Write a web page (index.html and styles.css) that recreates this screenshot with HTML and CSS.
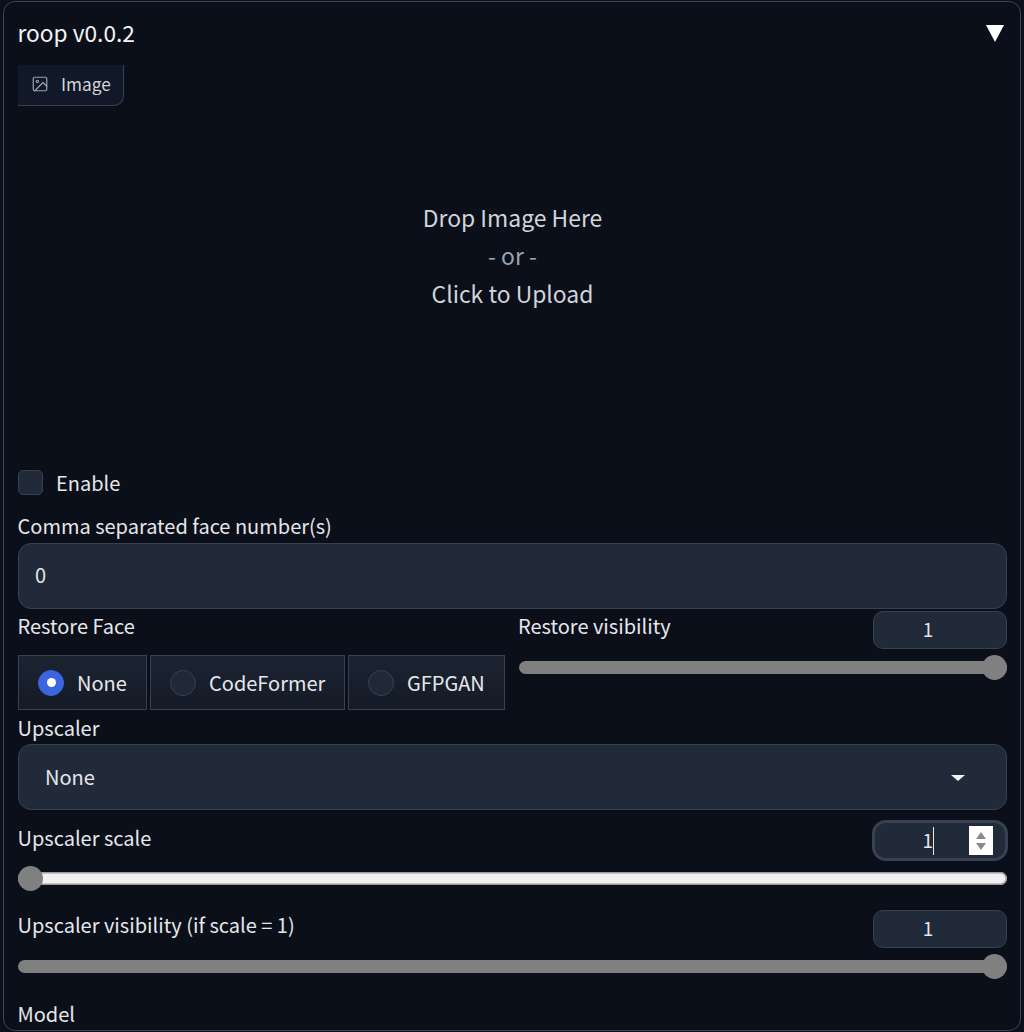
FILE: index.html
```html
<!DOCTYPE html>
<html lang="en">
<head>
<meta charset="utf-8">
<title>roop v0.0.2</title>
<link rel="stylesheet" href="styles.css">
</head>
<body>
<section class="panel">
  <header class="panel-head">
    <span class="panel-title">roop v0.0.2</span>
    <svg class="caret" viewBox="0 0 18 18" aria-hidden="true"><polygon points="0,0 18,0 9,17"/></svg>
  </header>
  <div class="tab">
    <svg class="tab-icon" viewBox="0 0 24 24" fill="none" stroke="currentColor" stroke-width="1.6" stroke-linecap="round" stroke-linejoin="round" aria-hidden="true"><rect x="3" y="3" width="18" height="18" rx="2"/><circle cx="8.5" cy="8.5" r="1.5"/><polyline points="21 15 16 10 5 21"/></svg>
    <span>Image</span>
  </div>
  <div class="drop">
    <div>Drop Image Here</div>
    <div class="drop-or">- or -</div>
    <div>Click to Upload</div>
  </div>
  <label class="check-row"><span class="checkbox"></span><span class="check-text">Enable</span></label>
  <div class="label face-label">Comma separated face number(s)</div>
  <div class="field face-field">0</div>
  <div class="restore">
    <div>
      <div class="label restore-label">Restore Face</div>
      <div class="radios">
        <div class="radio radio-none"><span class="dot dot-on"></span>None</div>
        <div class="radio radio-code"><span class="dot"></span>CodeFormer</div>
        <div class="radio radio-gfp"><span class="dot"></span>GFPGAN</div>
      </div>
    </div>
    <div>
      <div class="slider-head restore-head">
        <span class="label restore-vis">Restore visibility</span>
        <span class="num">1</span>
      </div>
      <div class="track"><span class="thumb thumb-end"></span></div>
    </div>
  </div>
  <div class="label upscaler-label">Upscaler</div>
  <div class="field select-field">None<span class="select-arrow"></span></div>
  <div class="slider-head scale-head">
    <span class="label">Upscaler scale</span>
    <span class="num num-focus"><span class="num-value">1</span><span class="cursor"></span><span class="spinner"><i class="up"></i><i class="down"></i></span></span>
  </div>
  <div class="track track-white"><span class="thumb thumb-start"></span></div>
  <div class="slider-head vis-head">
    <span class="label">Upscaler visibility (if scale = 1)</span>
    <span class="num">1</span>
  </div>
  <div class="track"><span class="thumb thumb-end"></span></div>
  <div class="label model-label">Model</div>
</section>
</body>
</html>
```
FILE: styles.css
```css
* { box-sizing: border-box; }
html, body { margin: 0; height: 1032px; overflow: hidden; background: #0b0f19; }
body {
  font-family: "Noto Sans CJK SC", "Source Sans Pro", "Noto Sans", sans-serif;
  color: #e5e7eb;
  font-size: 20px;
  line-height: 28px;
  padding: 1px 3px 0;
}
.panel {
  height: 1030px;
  border: 1px solid #3d4658;
  border-radius: 12px;
  padding: 0 13px 0 14px;
  background: #0b0f19;
}
.panel-head {
  height: 63px;
  display: flex;
  align-items: center;
  justify-content: space-between;
  padding: 1px 3px 0 0;
}
.panel-title { font-size: 22.7px; color: #f3f4f6; margin-top: -3px; margin-left: -0.5px; }
.caret { width: 18px; height: 18px; fill: #fff; }
.tab {
  width: 106px;
  height: 41px;
  display: flex;
  align-items: center;
  gap: 12px;
  padding: 0 0 2px 13px;
  background: #111827;
  border-right: 1px solid #374151;
  border-bottom: 1px solid #374151;
  border-bottom-right-radius: 10px;
  font-size: 17.3px;
  color: #d1d5db;
}
.tab-icon { width: 18px; height: 18px; color: #9ca3af; }
.drop {
  height: 364px;
  padding-top: 92px;
  text-align: center;
  font-size: 22.9px;
  line-height: 38.2px;
  color: #d1d5db;
}
.drop-or { color: #9ca3af; }
.check-row { display: flex; align-items: center; gap: 13px; height: 25px; }
.check-text { margin-top: 0; }
.checkbox {
  width: 25px;
  height: 25px;
  background: #212a38;
  border: 1px solid #374151;
  border-radius: 5px;
}
.label { color: #e5e7eb; line-height: 28px; margin-left: -0.5px; }
.face-label { margin-top: 17px; }
.field {
  background: #212a38;
  border: 1px solid #374151;
  border-radius: 13px;
  height: 66px;
  display: flex;
  align-items: center;
}
.face-field { margin-top: 3px; padding: 0 0 2px 16px; }
.restore {
  display: grid;
  grid-template-columns: 487px 1fr;
  column-gap: 14px;
  height: 100px;
  margin-top: 2px;
}
.restore-label { margin-top: 1px; }
.radios { display: flex; gap: 3px; margin-top: 15px; }
.radio {
  height: 55px;
  display: flex;
  align-items: center;
  gap: 13px;
  background: linear-gradient(#1c2432, #141a26);
  border: 1px solid #374151;
  color: #e5e7eb;
}
.radio-none { width: 129px; padding-left: 19px; }
.radio-code { width: 195px; padding-left: 19px; }
.radio-gfp { width: 157px; padding-left: 19px; }
.dot {
  width: 26px;
  height: 26px;
  border-radius: 50%;
  background: #1f2937;
  border: 1px solid #374151;
  flex: none;
}
.dot-on {
  background: #3b66e0;
  border-color: #3b66e0;
  display: flex;
  align-items: center;
  justify-content: center;
}
.dot-on::after {
  content: "";
  width: 9px;
  height: 9px;
  border-radius: 50%;
  background: #fff;
}
.slider-head { display: flex; justify-content: space-between; }
.num {
  width: 134px;
  height: 38px;
  background: #212a38;
  border: 1px solid #374151;
  border-radius: 10px;
  display: flex;
  align-items: center;
  justify-content: center;
  font-size: 19px;
  padding: 0 24px 2px 0;
}
.restore-head { height: 50px; }
.restore-head .label { margin-top: 1px; }
.restore-head .restore-vis { margin-left: -1px; }
.track {
  height: 13px;
  background: #808080;
  border-radius: 7px;
  position: relative;
}
.thumb {
  position: absolute;
  top: -6px;
  width: 25px;
  height: 25px;
  border-radius: 50%;
  background: #808080;
}
.thumb-end { right: 0; }
.thumb-start { left: 0; }
.track-white { background: #f0f0f0; box-shadow: inset 0 0 0 1.5px #9a9a9a; margin-top: 11px; }
.upscaler-label { margin-top: 3px; }
.select-field { margin-top: 2px; padding: 0 0 1px 26px; position: relative; }
.select-arrow {
  position: absolute;
  right: 41px;
  top: 30px;
  border-left: 7px solid transparent;
  border-right: 7px solid transparent;
  border-top: 6px solid #f3f4f6;
}
.scale-head { margin-top: 10px; height: 41px; margin-right: -1px; }
.scale-head .label { margin-top: 4px; }
.num-focus {
  width: 136px;
  height: 41px;
  border: 3px solid #374151;
  border-radius: 14px;
  justify-content: flex-end;
  padding: 0 0 2px 0;
  position: relative;
}
.cursor { width: 1px; height: 28px; background: #e5e7eb; margin: 2px 71px 0 0; }
.spinner {
  width: 24px;
  height: 29px;
  background: #fff;
  position: absolute;
  right: 12px;
  top: 3px;
  display: flex;
  flex-direction: column;
  align-items: center;
  justify-content: center;
  gap: 4px;
}
.spinner i { width: 0; height: 0; border-left: 5px solid transparent; border-right: 5px solid transparent; }
.spinner .up { border-bottom: 7px solid #8a8a8a; }
.spinner .down { border-top: 7px solid #8a8a8a; }
.vis-head { margin-top: 25px; height: 50px; }
.vis-head .label { margin-top: 1px; }
.model-label { margin-top: 27px; }
```
